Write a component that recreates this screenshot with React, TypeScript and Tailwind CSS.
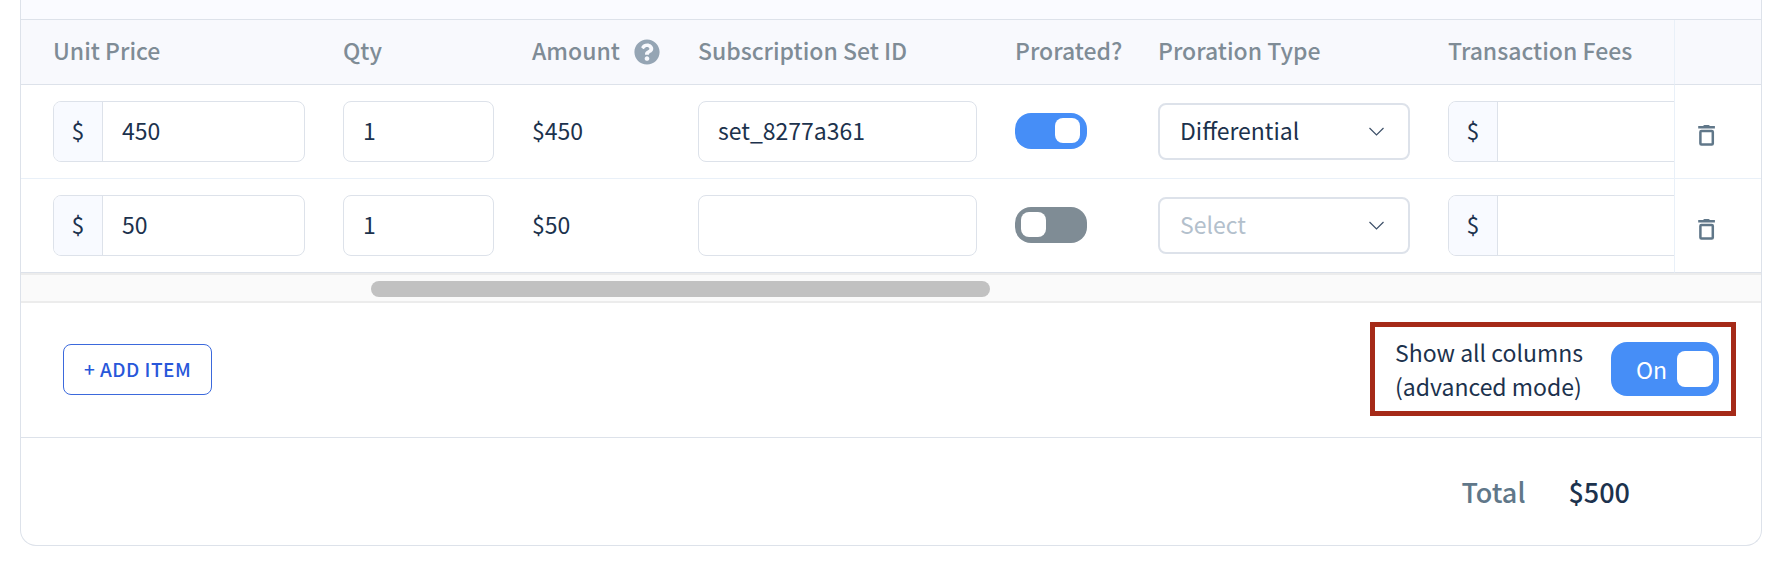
import React, { useState } from "react";
import { FaQuestionCircle } from "react-icons/fa";

interface LineItem {
  id: number;
  unitPrice: string;
  qty: string;
  setId: string;
  prorated: boolean;
  prorationType: string;
  fees: string;
}

const initialItems: LineItem[] = [
  {
    id: 1,
    unitPrice: "450",
    qty: "1",
    setId: "set_8277a361",
    prorated: true,
    prorationType: "differential",
    fees: "",
  },
  {
    id: 2,
    unitPrice: "50",
    qty: "1",
    setId: "",
    prorated: false,
    prorationType: "",
    fees: "",
  },
];

// share of the track before the thumb, and the thumb itself
const scroll = { start: 20.1, size: 35.6 };

const TrashIcon = () => (
  <svg width="18" height="22" viewBox="0 0 18 22" aria-hidden="true">
    <path d="M5.3 1Q5.3 0 6.5 0h4Q11.7 0 11.7 1h5.2V3.6H.2V1z" fill="currentColor" />
    <rect
      x="2.4"
      y="6"
      width="12.4"
      height="13.6"
      rx="1"
      fill="none"
      stroke="currentColor"
      strokeWidth="2.5"
    />
  </svg>
);

interface FieldProps {
  label: string;
  value: string;
  onChange: (value: string) => void;
}

const MoneyInput: React.FC<FieldProps> = ({ label, value, onChange }) => (
  <div className="flex h-[61px] overflow-hidden rounded-lg border border-[#dde2ea] bg-white">
    <span className="flex w-[49px] shrink-0 items-center justify-center border-r border-[#dde2ea] bg-[#f8faff] pb-1">
      $
    </span>
    <input
      type="text"
      aria-label={label}
      value={value}
      onChange={(e) => onChange(e.target.value)}
      className="w-full min-w-0 px-[19px] pb-1 outline-none"
    />
  </div>
);

const TextInput: React.FC<FieldProps> = ({ label, value, onChange }) => (
  <input
    type="text"
    aria-label={label}
    value={value}
    onChange={(e) => onChange(e.target.value)}
    className="block h-[61px] w-full rounded-lg border border-[#dde2ea] bg-white px-[19px] pb-1 outline-none"
  />
);

const App: React.FC = () => {
  const [items, setItems] = useState<LineItem[]>(initialItems);
  const [showAll, setShowAll] = useState(true);

  const updateItem = (id: number, changes: Partial<LineItem>) => {
    setItems((prev) =>
      prev.map((item) => (item.id === id ? { ...item, ...changes } : item))
    );
  };

  const addItem = () => {
    setItems((prev) => [
      ...prev,
      { ...initialItems[1], id: Date.now(), unitPrice: "0" },
    ]);
  };

  const removeItem = (id: number) => {
    setItems((prev) => prev.filter((item) => item.id !== id));
  };

  const amount = (item: LineItem) =>
    (Number(item.unitPrice) || 0) * (Number(item.qty) || 0);
  const total = items.reduce((sum, item) => sum + amount(item), 0);

  const th = "h-[65px] border-b border-[#dde2ea] bg-[#f8f9fd] px-[19px] pb-1 font-medium";
  const td = "h-[94px] border-b border-[#e9f0f8] px-[19px] group-last:border-[#dde2ea]";

  return (
    <main className="bg-white px-5 pb-6 font-['Noto_Sans_CJK_SC','Source_Sans_Pro',sans-serif] text-[23px] leading-[34px] text-[#1c324d]">
      <div className="overflow-hidden rounded-b-2xl border-x border-b border-[#dde2ea]">
        <div className="h-5 border-b border-[#dde2ea] bg-[#fafbff]" />

        {/* Line items */}
        <div className="overflow-x-auto [scrollbar-width:none]">
          <table className="w-full min-w-[1785px] table-fixed border-separate border-spacing-0 text-left">
            <colgroup>
              <col className="w-[303px]" />
              <col className="w-[189px]" />
              <col className="w-[166px]" />
              <col className="w-[317px]" />
              <col className="w-[143px]" />
              <col className="w-[290px]" />
              <col className="w-[290px]" />
              <col className="w-[87px]" />
            </colgroup>
            <thead>
              <tr className="whitespace-nowrap text-[#7f8c96]">
                <th className={`${th} pl-8`}>Unit Price</th>
                <th className={th}>Qty</th>
                <th className={th}>
                  <span className="flex items-center gap-[14px]">
                    Amount
                    <FaQuestionCircle size={26} className="mt-[3px] shrink-0 text-[#95a5b4]" />
                  </span>
                </th>
                <th className={th}>Subscription Set ID</th>
                <th className={th}>Prorated?</th>
                <th className={th}>Proration Type</th>
                <th className={th}>Transaction Fees</th>
                <th
                  aria-label="Actions"
                  className="sticky right-0 border-b border-l border-b-[#dde2ea] border-l-[#e9f0f8] bg-[#f8f9fd]"
                />
              </tr>
            </thead>
            <tbody>
              {items.map((item) => (
                <tr key={item.id} className="group">
                  <td className={`${td} pl-8`}>
                    <MoneyInput
                      label="Unit Price"
                      value={item.unitPrice}
                      onChange={(unitPrice) => updateItem(item.id, { unitPrice })}
                    />
                  </td>
                  <td className={td}>
                    <TextInput
                      label="Qty"
                      value={item.qty}
                      onChange={(qty) => updateItem(item.id, { qty })}
                    />
                  </td>
                  <td className={`${td} pb-1`}>${amount(item)}</td>
                  <td className={td}>
                    <TextInput
                      label="Subscription Set ID"
                      value={item.setId}
                      onChange={(setId) => updateItem(item.id, { setId })}
                    />
                  </td>
                  <td className={`${td} pb-[2px]`}>
                    <input
                      type="checkbox"
                      aria-label="Prorated?"
                      checked={item.prorated}
                      onChange={(e) =>
                        updateItem(item.id, { prorated: e.target.checked })
                      }
                      className="flex h-9 w-[72px] cursor-pointer appearance-none items-center rounded-2xl bg-[#7f8c95] pr-[7px] pl-[6px] before:size-[25px] before:rounded-lg before:bg-white before:content-[''] checked:justify-end checked:bg-[#468ef7]"
                    />
                  </td>
                  <td className={td}>
                    <div className="relative">
                      <select
                        aria-label="Proration Type"
                        value={item.prorationType}
                        onChange={(e) =>
                          updateItem(item.id, { prorationType: e.target.value })
                        }
                        className={`block h-[57px] w-full appearance-none rounded-lg border-2 border-[#dde2ea] bg-white px-5 pb-1 outline-none ${
                          item.prorationType ? "" : "text-[#b3c0cc]"
                        }`}
                      >
                        <option value="">Select</option>
                        <option value="differential">Differential</option>
                      </select>
                      <svg
                        className="pointer-events-none absolute top-6 right-[26px]"
                        width="15"
                        height="9"
                        viewBox="0 0 15 9"
                        fill="none"
                        stroke="#3d5068"
                        strokeWidth="1.2"
                      >
                        <path d="M.5 1l7 7 7-7" />
                      </svg>
                    </div>
                  </td>
                  <td className={td}>
                    <MoneyInput
                      label="Transaction Fees"
                      value={item.fees}
                      onChange={(fees) => updateItem(item.id, { fees })}
                    />
                  </td>
                  <td className="sticky right-0 border-b border-l border-[#e9f0f8] bg-white pt-2 pl-[23px] group-last:border-b-[#dde2ea]">
                    <button
                      type="button"
                      aria-label="Delete item"
                      onClick={() => removeItem(item.id)}
                      className="block cursor-pointer text-[#607789]"
                    >
                      <TrashIcon />
                    </button>
                  </td>
                </tr>
              ))}
            </tbody>
          </table>
        </div>

        {/* Scrollbar */}
        <div className="border-y-2 border-[#ececec] bg-[#fafafa] pt-[6px] pb-1">
          <div
            className="h-4 rounded-full bg-[#c1c1c1]"
            style={{ marginLeft: `${scroll.start}%`, width: `${scroll.size}%` }}
          />
        </div>

        {/* Actions */}
        <div className="flex items-center justify-between border-b border-[#dde2ea] pt-[19px] pr-[25px] pb-[21px] pl-[42px]">
          <button
            type="button"
            onClick={addItem}
            className="h-[51px] cursor-pointer rounded-lg border border-[#3b69dc] px-5 text-[19px] font-medium tracking-wide text-[#2857da]"
          >
            + ADD ITEM
          </button>
          <div className="flex items-center gap-7 border-5 border-[#a52a18] py-2 pr-3 pl-5">
            <label htmlFor="show-all">
              Show all columns
              <br />
              (advanced mode)
            </label>
            <label className="flex h-[54px] w-[108px] cursor-pointer items-center justify-end gap-[10px] rounded-2xl bg-[#7f8c95] px-[6px] text-white has-checked:bg-[#468ef7]">
              <input
                id="show-all"
                type="checkbox"
                checked={showAll}
                onChange={(e) => setShowAll(e.target.checked)}
                className="sr-only"
              />
              {showAll ? "On" : "Off"}
              <span className="size-9 rounded-lg bg-white" />
            </label>
          </div>
        </div>

        {/* Total */}
        <div className="flex h-[107px] items-center justify-end gap-[43px] pr-[131px] text-[27px] font-medium">
          <span className="text-[#607789]">Total</span>
          <span>${total}</span>
        </div>
      </div>
    </main>
  );
};

export default App;
